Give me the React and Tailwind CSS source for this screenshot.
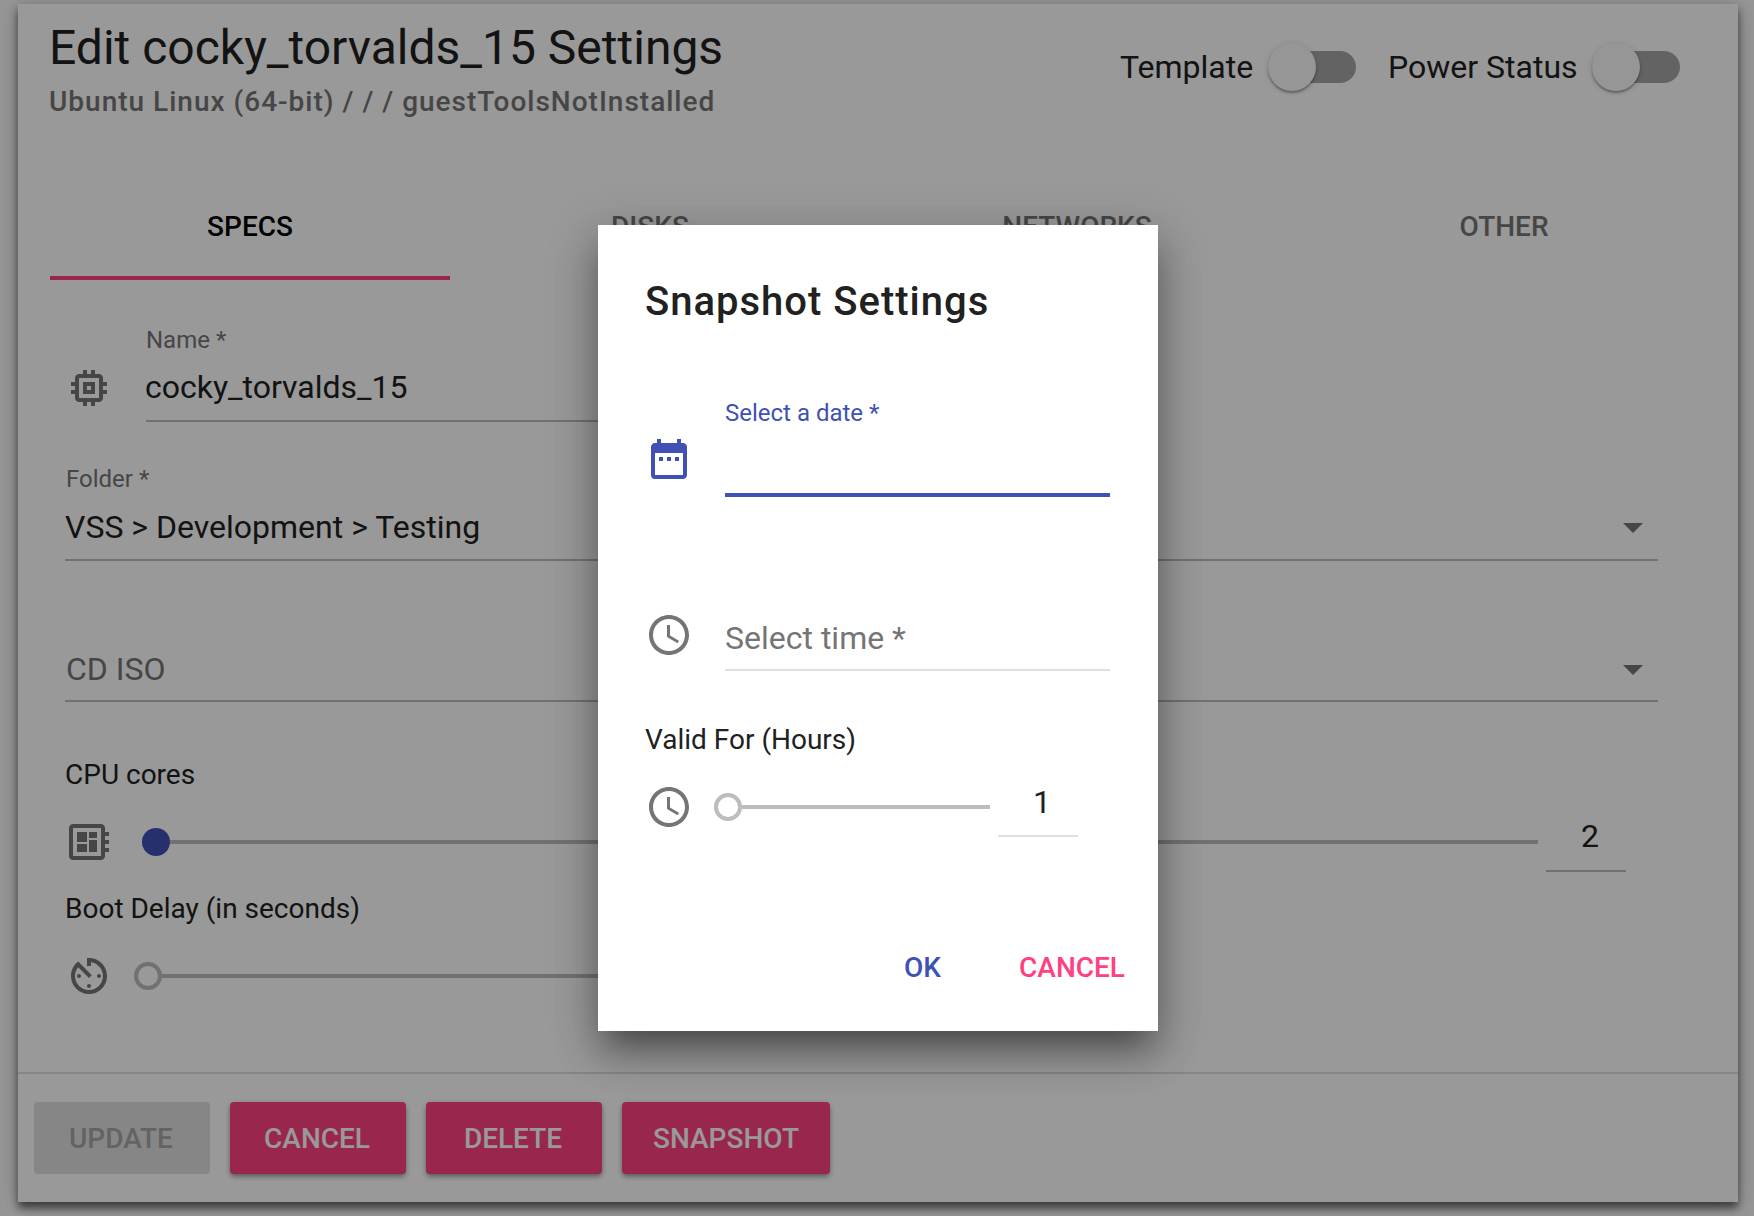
import React from "react";
import { MdMemory, MdDeveloperBoard, MdAvTimer, MdAccessTime, MdDateRange } from "react-icons/md";

const Arrow = () => (
  <svg width="20" height="10" viewBox="0 0 20 10" className="shrink-0 mt-[2px]">
    <path d="M0 0h20L10 10z" fill="#757575" />
  </svg>
);

const Switch = () => (
  <div className="relative h-12 w-[88px] flex items-center justify-end shrink-0">
    <div className="h-8 w-[68px] rounded-full bg-[#a6a6a6]" />
    <div className="absolute left-0 top-0 h-12 w-12 rounded-full bg-[#fafafa] shadow-[0_2px_2px_rgba(0,0,0,0.3),0_1px_6px_rgba(0,0,0,0.15)]" />
  </div>
);

const Tab = ({ w, active, children }) => (
  <div
    className={`h-[104px] pt-px flex items-center justify-center text-[28px] font-medium border-b-4 ${w} ${
      active ? "border-[#ff4081] text-black" : "border-transparent text-[#757575]"
    }`}
  >
    {children}
  </div>
);

const Btn = ({ w, disabled, pad, children }) => (
  <div
    className={`h-[72px] rounded-[4px] pt-[2px] flex items-center justify-center text-[28px] font-medium ${w} ${pad} ${
      disabled
        ? "bg-[#e0e0e0] text-[#a6a6a6]"
        : "bg-[#ff4081] text-white shadow-[0_3px_5px_-1px_rgba(0,0,0,0.3),0_2px_6px_rgba(0,0,0,0.2)]"
    }`}
  >
    {children}
  </div>
);

export default function App() {
  return (
    <div
      className="relative w-[1754px] h-[1216px] overflow-hidden bg-[#fafafa] text-[#212121]"
      style={{ fontFamily: "Roboto, sans-serif" }}
    >
      <div className="pt-1 px-[18px]">
        {/* Panel */}
        <div className="h-[1198px] w-[1720px] bg-white flex flex-col shadow-[0_6px_8px_rgba(0,0,0,0.55),0_2px_20px_rgba(0,0,0,0.2)]">
          <div className="pt-4 pl-8 pr-[58px] flex justify-between items-start">
            <div>
              <div className="h-14 leading-[56px] text-[48px] -ml-px">Edit cocky_torvalds_15 Settings</div>
              <div className="mt-[6px] -mb-[2px] h-10 leading-10 text-[28px] font-medium tracking-[1px] text-[#757575] -ml-px">
                Ubuntu Linux (64-bit) / / / guestToolsNotInstalled
              </div>
            </div>
            <div className="flex items-center mt-[23px]">
              <span className="text-[32px] w-[148px]">Template</span>
              <Switch />
              <span className="text-[32px] ml-[32px] w-[204px]">Power Status</span>
              <Switch />
            </div>
          </div>

          <div className="mt-[56px] pl-8 flex">
            <Tab w="w-[400px]" active>SPECS</Tab>
            <Tab w="w-[400px]">DISKS</Tab>
            <Tab w="w-[454px]">NETWORKS</Tab>
            <Tab w="w-[400px]">OTHER</Tab>
          </div>

          <div className="pl-[47px] pr-[80px]">
            <div className="mt-[44px] flex items-start">
              <MdMemory className="mt-[40px] text-[48px] text-[#757575] shrink-0" />
              <div className="ml-[33px] w-[560px] border-b-2 border-[#bdbdbd] pb-[9px]">
                <div className="h-8 leading-8 text-[24px] text-[#757575]">Name *</div>
                <div className="mt-[7px] h-12 leading-[48px] text-[32px] -ml-px">cocky_torvalds_15</div>
              </div>
            </div>

            <div className="mt-[41px] border-b-2 border-[#bdbdbd] pb-2">
              <div className="h-8 leading-8 text-[24px] text-[#757575] ml-px">Folder *</div>
              <div className="mt-2 h-12 leading-[48px] text-[32px] flex items-center justify-between pr-[15px]">
                <span>VSS &gt; Development &gt; Testing</span>
                <Arrow />
              </div>
            </div>

            <div className="mt-[84px] border-b-2 border-[#bdbdbd] pb-[7px]">
              <div className="h-12 leading-[48px] text-[32px] text-[#757575] flex items-center justify-between pr-[15px]">
                <span className="ml-px">CD ISO</span>
                <Arrow />
              </div>
            </div>

            <div className="mt-[55px] h-9 leading-9 text-[28px]">CPU cores</div>
            <div className="mt-5 flex items-start">
              <MdDeveloperBoard className="mt-[5px] text-[48px] text-[#757575] shrink-0" />
              <div className="ml-[29px] mt-[15px] h-7 flex items-center w-[1396px] shrink-0">
                <div className="h-7 w-7 rounded-full bg-[#3f51b5] shrink-0" />
                <div className="h-1 flex-1 bg-[#bdbdbd]" />
              </div>
              <div className="ml-2 -mt-px w-[80px] border-b-2 border-[#bdbdbd] pb-[10px] text-center">
                <div className="h-12 leading-[48px] text-[32px] pl-2">2</div>
              </div>
            </div>

            <div className="mt-[19px] h-9 leading-9 text-[28px]">Boot Delay (in seconds)</div>
            <div className="mt-[25px] flex items-center">
              <MdAvTimer className="text-[48px] text-[#757575] shrink-0" />
              <div className="ml-[21px] h-7 flex items-center w-[560px] shrink-0">
                <div className="h-7 w-7 rounded-full border-4 border-[#bdbdbd] shrink-0" />
                <div className="h-1 flex-1 bg-[#bdbdbd]" />
              </div>
            </div>
          </div>

          <div className="mt-auto border-t-2 border-[#e0e0e0] px-4 py-7 flex gap-5">
            <Btn w="w-[176px]" pad="pr-[2px]" disabled>UPDATE</Btn>
            <Btn w="w-[176px]" pad="pr-[2px]">CANCEL</Btn>
            <Btn w="w-[176px]" pad="pr-[2px]">DELETE</Btn>
            <Btn w="w-[208px]">SNAPSHOT</Btn>
          </div>
        </div>
      </div>

      {/* Backdrop */}
      <div className="absolute inset-0 bg-black/40" />

      {/* Dialog */}
      <div className="absolute left-[598px] top-[225px] w-[560px] h-[806px] bg-white pl-[47px] pt-[49px] shadow-[0_22px_30px_-14px_rgba(0,0,0,0.38),0_24px_38px_3px_rgba(0,0,0,0.2),0_9px_46px_8px_rgba(0,0,0,0.12)]">
        <div className="h-14 leading-[56px] text-[40px] font-medium tracking-[1px]">Snapshot Settings</div>

        <div className="mt-[67px] flex items-start">
          <MdDateRange className="mt-[38px] text-[48px] text-[#3f51b5] shrink-0" />
          <div className="ml-8 w-[385px] h-[100px] border-b-4 border-[#3f51b5]">
            <div className="h-8 leading-8 text-[24px] text-[#3f51b5]">Select a date *</div>
          </div>
        </div>

        <div className="mt-[114px] flex items-start">
          <MdAccessTime className="text-[48px] text-[#757575] shrink-0" />
          <div className="ml-8 w-[385px] pt-[3px] pb-[7px] border-b-2 border-[#e0e0e0]">
            <div className="h-12 leading-[48px] text-[32px] text-[#757575]">Select time *</div>
          </div>
        </div>

        <div className="mt-[51px] h-9 leading-9 text-[28px]">Valid For (Hours)</div>

        <div className="mt-5 flex items-start">
          <MdAccessTime className="mt-[5px] text-[48px] text-[#757575] shrink-0" />
          <div className="ml-[21px] mt-[15px] w-[276px] h-7 flex items-center shrink-0">
            <div className="h-7 w-7 rounded-full border-4 border-[#bdbdbd] shrink-0" />
            <div className="h-1 flex-1 bg-[#bdbdbd]" />
          </div>
          <div className="ml-2 w-20 pb-[9px] border-b-2 border-[#e0e0e0] text-center">
            <div className="h-12 leading-[48px] text-[32px] pl-2">1</div>
          </div>
        </div>

        <div className="mt-[111px] pr-[33px] flex justify-end gap-[78px] h-10 leading-10 text-[28px] font-medium">
          <span className="text-[#3f51b5]">OK</span>
          <span className="text-[#ff4081]">CANCEL</span>
        </div>
      </div>
    </div>
  );
}
